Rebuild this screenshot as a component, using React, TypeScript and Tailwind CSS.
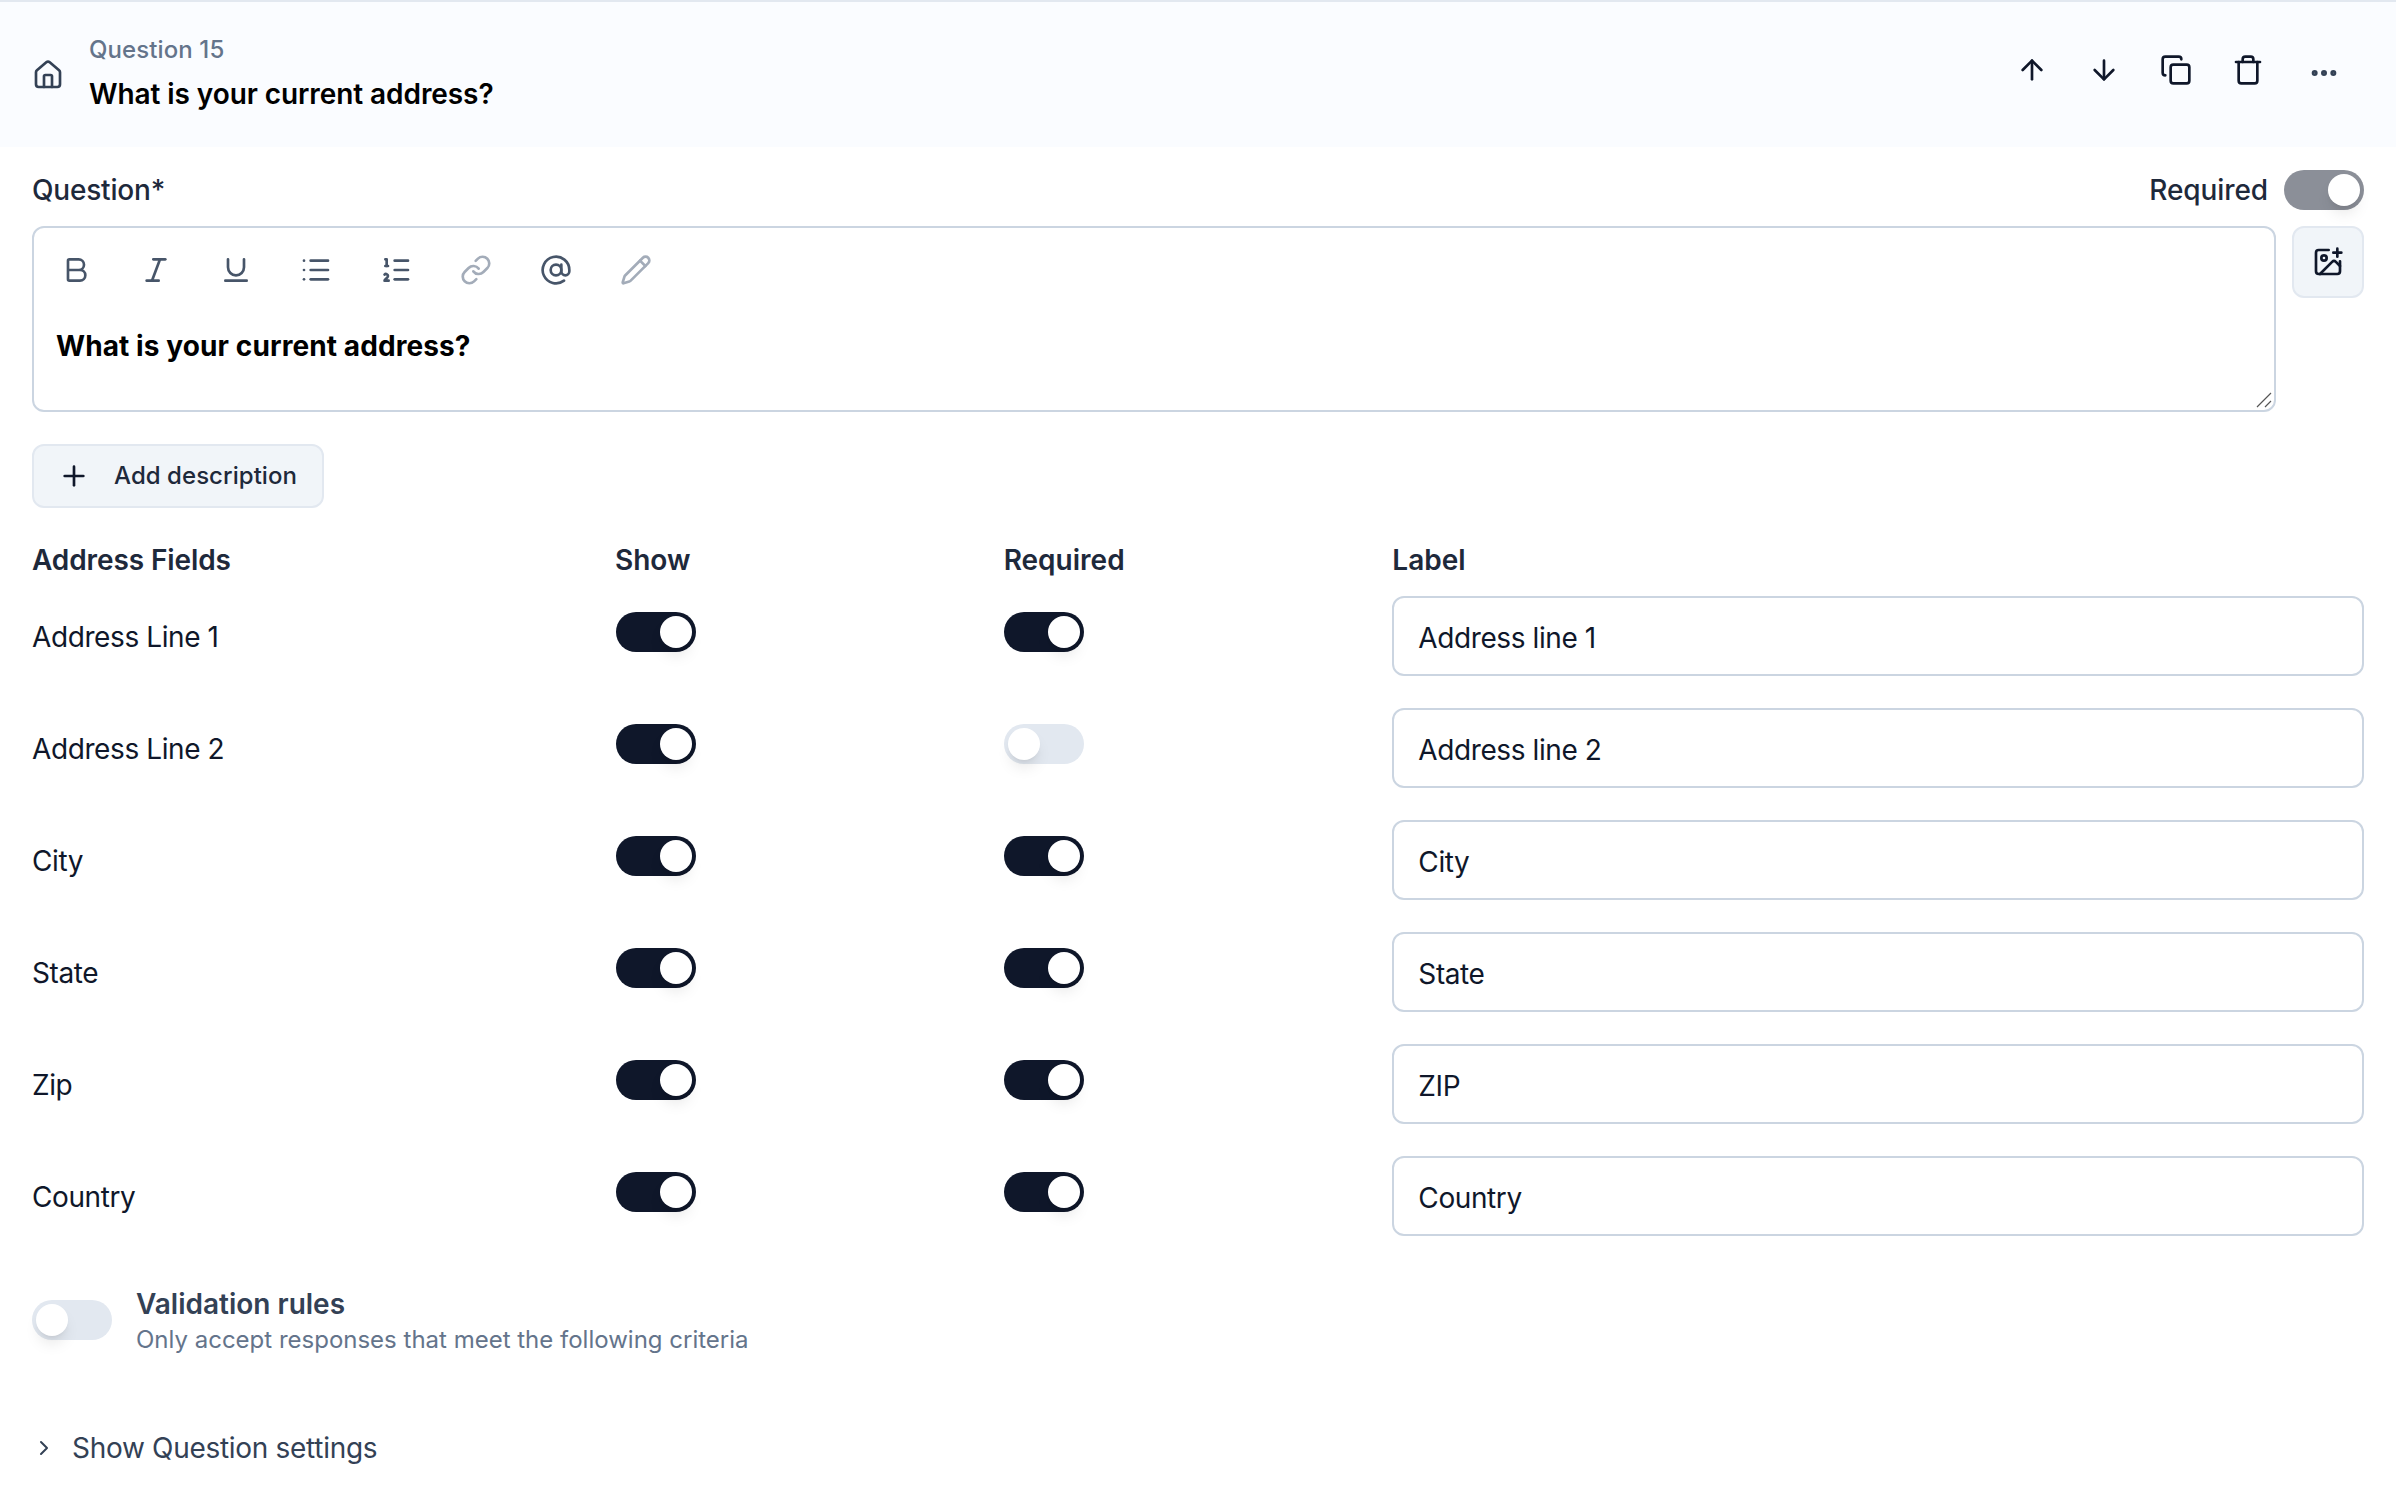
import React from "react";
import { House, ArrowUp, ArrowDown, Copy, Trash, Ellipsis, Bold, Italic, Underline, List, ListOrdered, Link, AtSign, Pencil, ImagePlus, Plus, ChevronRight } from "lucide-react";

function Toggle({ on, muted }: { on: boolean; muted?: boolean }) {
  const track = muted ? "bg-[#8b8f98]" : on ? "bg-[#0f172a]" : "bg-[#e2e8f0]";
  return (
    <div className={`flex h-[40px] w-[80px] shrink-0 rounded-full border-[4px] border-transparent ${track} ${on ? "justify-end" : "justify-start"}`}>
      <div className="h-[32px] w-[32px] rounded-full bg-white shadow-[0_10px_15px_-3px_rgba(0,0,0,0.1),0_4px_6px_-4px_rgba(0,0,0,0.1)]" />
    </div>
  );
}

const rows = [
  { name: "Address Line 1", show: true, req: true, label: "Address line 1" },
  { name: "Address Line 2", show: true, req: false, label: "Address line 2" },
  { name: "City", show: true, req: true, label: "City" },
  { name: "State", show: true, req: true, label: "State" },
  { name: "Zip", show: true, req: true, label: "ZIP" },
  { name: "Country", show: true, req: true, label: "Country" },
];

export default function App() {
  return (
    <div className="min-h-[1500px] bg-white font-['Inter',sans-serif] text-[#0f172a]">
      <div className="flex h-[147px] items-center justify-between border-t-2 border-[#e2e8f0] bg-[#fafcff] pb-[6px] pl-[32px] pr-[56px]">
        <div className="flex items-center gap-[25px]">
          <House className="mt-[6px] h-[32px] w-[32px] text-[#334155]" strokeWidth={2} />
          <div className="flex flex-col">
            <span className="text-[24px] font-medium leading-[32px] tracking-[0.1px] text-[#64748b]">Question 15</span>
            <span className="mt-[12px] text-[28px] font-semibold leading-[32px] tracking-[-0.08px] text-black">What is your current address?</span>
          </div>
        </div>
        <div className="-mt-[3px] flex items-center gap-[40px]">
          <ArrowUp className="h-[32px] w-[32px]" strokeWidth={2} />
          <ArrowDown className="h-[32px] w-[32px]" strokeWidth={2} />
          <Copy className="h-[32px] w-[32px]" strokeWidth={2} />
          <Trash className="h-[32px] w-[32px]" strokeWidth={2} />
          <Ellipsis className="ml-[4px] mt-[6px] h-[32px] w-[32px] text-[#334155]" strokeWidth={2.5} />
        </div>
      </div>

      <div className="px-[32px]">
        <div className="mt-[23px] flex h-[40px] items-center justify-between">
          <span className="text-[28px] font-medium tracking-[-0.2px] text-[#1e293b]">Question*</span>
          <div className="flex items-center gap-[16px]">
            <span className="text-[28px] font-medium tracking-[-0.1px] text-[#1e293b]">Required</span>
            <Toggle on muted />
          </div>
        </div>

        <div className="mt-[16px] flex items-start gap-[16px]">
          <div className="relative h-[186px] flex-1 rounded-[12px] border-2 border-[#cbd5e1] bg-white">
            <div className="flex h-[84px] items-center gap-[48px] pl-[26px] text-[#475569]">
              <Bold className="h-[32px] w-[32px]" strokeWidth={2} />
              <Italic className="h-[32px] w-[32px]" strokeWidth={2} />
              <Underline className="h-[32px] w-[32px]" strokeWidth={2} />
              <List className="h-[32px] w-[32px]" strokeWidth={2} />
              <ListOrdered className="h-[32px] w-[32px]" strokeWidth={2} />
              <Link className="h-[32px] w-[32px] text-[#a3acb9]" strokeWidth={2} />
              <AtSign className="h-[32px] w-[32px]" strokeWidth={2} />
              <Pencil className="h-[32px] w-[32px] text-[#a3acb9]" strokeWidth={2} />
            </div>
            <div className="mt-[14px] pl-[22px] text-[28px] font-bold leading-[40px] tracking-[0.1px] text-black">What is your current address?</div>
            <svg className="absolute bottom-[2px] right-[2px] h-[16px] w-[16px]" viewBox="0 0 16 16" fill="none" stroke="#555" strokeWidth="1.2">
              <path d="M1 15 L15 1 M9 15 L15 9" />
            </svg>
          </div>
          <div className="flex h-[72px] w-[72px] items-center justify-center rounded-[12px] border-2 border-[#e2e8f0] bg-[#f1f5f9]">
            <ImagePlus className="h-[32px] w-[32px]" strokeWidth={2} />
          </div>
        </div>

        <div className="mt-[32px] flex h-[64px] w-[292px] items-center gap-[24px] rounded-[12px] border-2 border-[#e2e8f0] bg-[#f1f5f9] pl-[24px]">
          <Plus className="h-[32px] w-[32px]" strokeWidth={2} />
          <span className="text-[24px] font-medium tracking-[0.05px] text-[#1e293b]">Add description</span>
        </div>

        <div className="mt-[32px] grid grid-cols-12 text-[28px]">
          <div className="col-span-3 font-semibold leading-[40px] tracking-[-0.1px] text-[#1e293b]">Address Fields</div>
          <div className="col-span-2 font-semibold leading-[40px] text-[#1e293b]">Show</div>
          <div className="col-span-2 font-semibold leading-[40px] text-[#1e293b]">Required</div>
          <div className="col-span-5 font-semibold leading-[40px] text-[#1e293b]">Label</div>
        </div>

        <div className="mt-[16px] flex flex-col gap-[32px]">
          {rows.map((r) => (
            <div key={r.name} className="grid h-[80px] grid-cols-12 text-[28px]">
              <div className="col-span-3 pt-[21px] leading-[40px] tracking-[-0.4px] text-[#0f172a]">{r.name}</div>
              <div className="col-span-2 pl-[1px] pt-[16px]"><Toggle on={r.show} /></div>
              <div className="col-span-2 pt-[16px]"><Toggle on={r.req} /></div>
              <div className="col-span-5 flex items-center rounded-[12px] border-2 border-[#cbd5e1] bg-white pl-[24px] pt-[4px] leading-[40px] tracking-[-0.4px] text-[#0f172a]">{r.label}</div>
            </div>
          ))}
        </div>

        <div className="mt-[48px] flex items-start gap-[24px]">
          <div className="mt-[16px]"><Toggle on={false} /></div>
          <div className="flex flex-col">
            <span className="text-[28px] font-semibold leading-[40px] text-[#334155]">Validation rules</span>
            <span className="text-[24px] leading-[32px] text-[#64748b]">Only accept responses that meet the following criteria</span>
          </div>
        </div>

        <div className="mt-[72px] flex items-center gap-[16px]">
          <ChevronRight className="h-[24px] w-[24px] text-[#334155]" strokeWidth={2} />
          <span className="text-[28px] leading-[40px] tracking-[-0.3px] text-[#334155]">Show Question settings</span>
        </div>
      </div>
    </div>
  );
}
